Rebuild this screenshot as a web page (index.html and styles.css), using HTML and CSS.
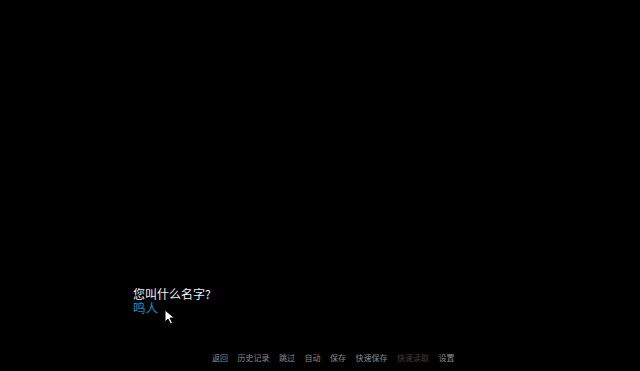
FILE: index.html
```html
<!DOCTYPE html>
<html lang="zh-CN">
<head>
  <meta charset="UTF-8" />
  <title>对话</title>
  <link rel="stylesheet" href="styles.css">
</head>
<body>
  <div class="screen">
    <div class="say">
      <p class="what">您叫什么名字?</p>
      <p class="input">鸣人</p>
    </div>

    <nav class="quick-menu">
      <span>返回</span>
      <span>历史记录</span>
      <span>跳过</span>
      <span>自动</span>
      <span>保存</span>
      <span>快速保存</span>
      <span class="disabled">快速读取</span>
      <span>设置</span>
    </nav>

    <svg class="cursor" width="12" height="16" viewBox="0 0 12 16">
      <path d="M1 1 L1 13 L4 10 L6.5 15 L8.5 14 L6 9 L10.5 9 Z" fill="#fff" stroke="#000" stroke-width="1" />
    </svg>
  </div>
</body>
</html>
```

FILE: styles.css
```css
* {
  box-sizing: border-box;
  margin: 0;
  padding: 0;
}

body {
  background: #000;
  font-family: "Noto Sans CJK SC", "Noto Sans", sans-serif;
  overflow: hidden;
}

.screen {
  position: relative;
  width: 640px;
  height: 371px;
  display: flex;
  flex-direction: column;
  justify-content: flex-end;
}

.say {
  padding-left: 133px;
  margin-bottom: 38px;
}

.what {
  color: #f2f2f2;
  font-size: 12px;
  line-height: 14px;
}

.input {
  color: #1b8cc4;
  font-size: 12.5px;
  line-height: 14px;
}

.quick-menu {
  display: flex;
  gap: 9.5px;
  padding-left: 212px;
  margin-bottom: 8px;
  color: #8c8c8c;
  font-size: 8px;
  line-height: 10px;
}

.quick-menu .disabled {
  color: #404040;
}

.cursor {
  position: absolute;
  left: 164px;
  top: 309px;
}
```
